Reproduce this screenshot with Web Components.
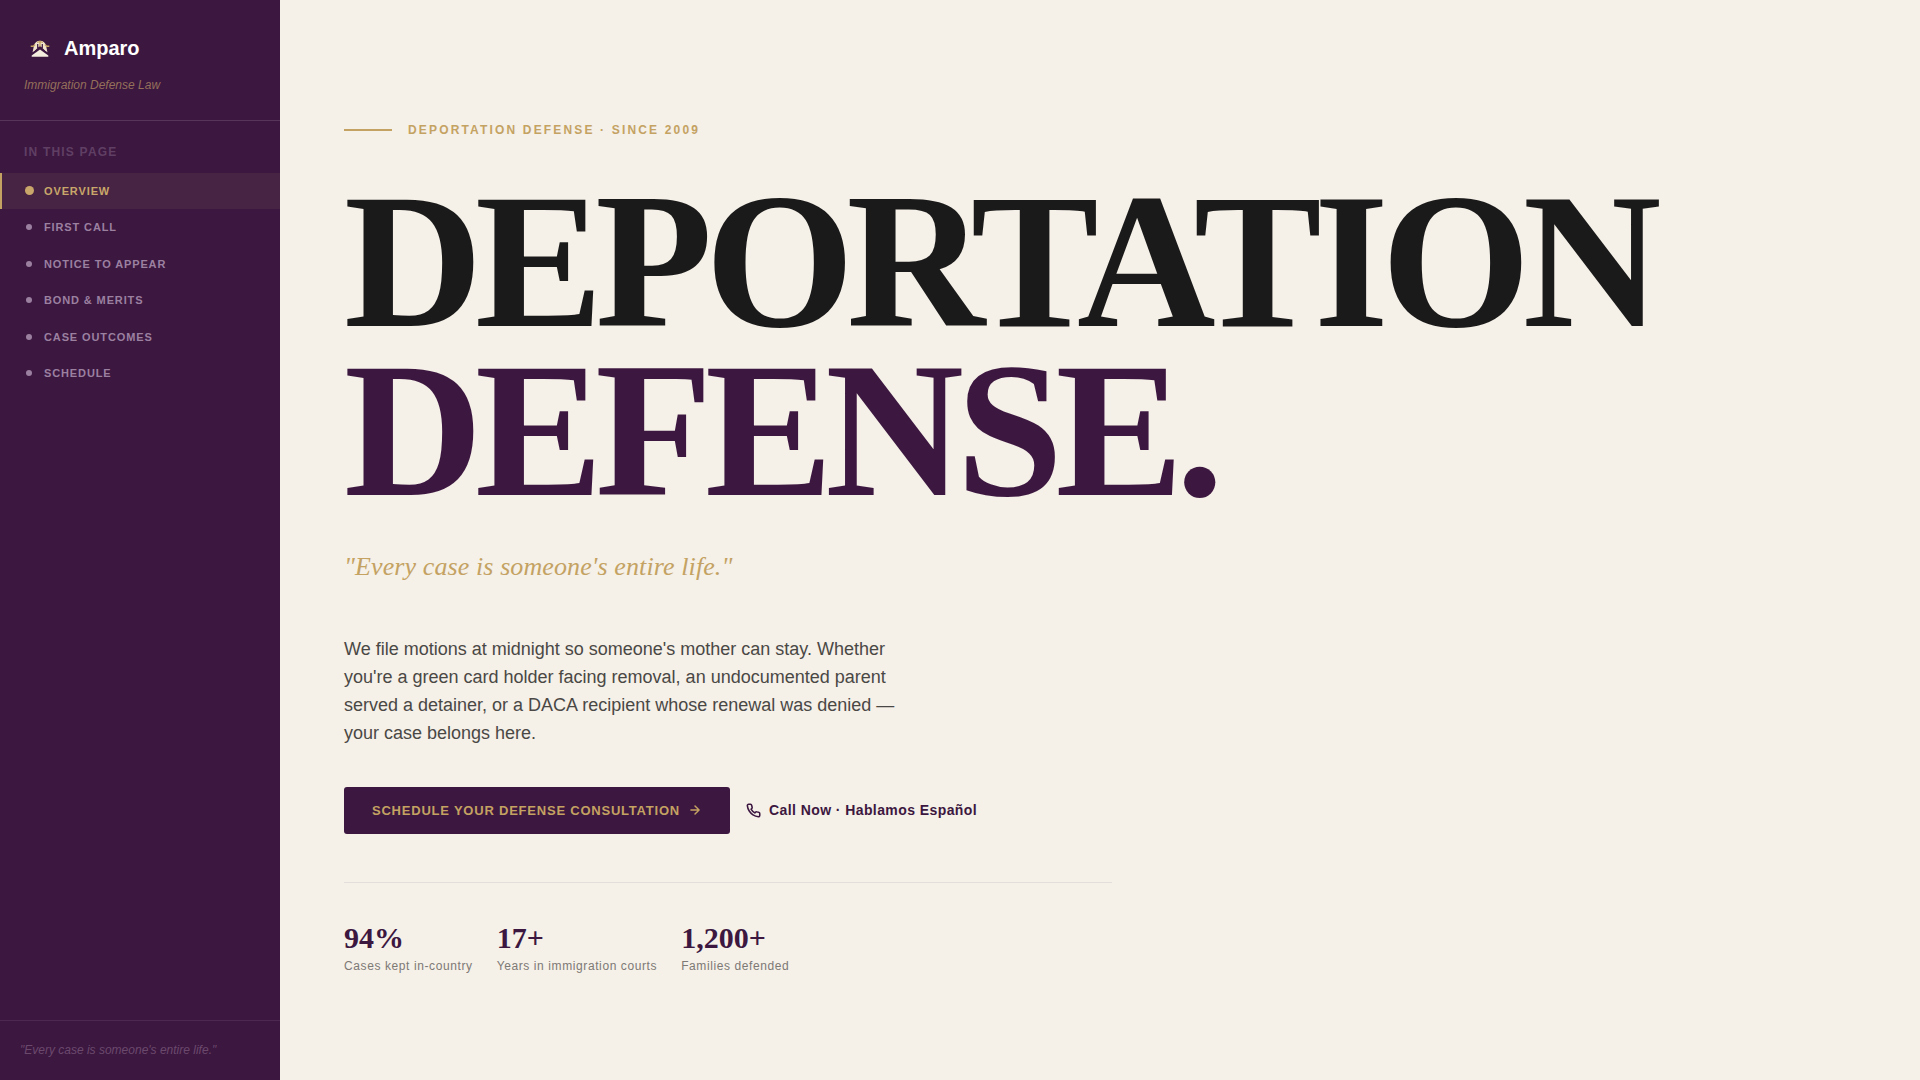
<!DOCTYPE html>
<html lang="en">
<head>
<meta charset="utf-8">
<title>Amparo — Immigration Defense Law</title>
<style>
:root{--plum:#3c1740;--gold:#c4a262;--cream:#f5f0e8;--ink:#1a1a1a}
body{margin:0;background:var(--cream);color:var(--ink);font-family:"Liberation Sans",sans-serif}
</style>
</head>
<body>
<amparo-page>
  <amparo-sidebar slot="sidebar">
    <amparo-nav-item href="#overview" active>Overview</amparo-nav-item>
    <amparo-nav-item href="#first-call">First Call</amparo-nav-item>
    <amparo-nav-item href="#notice">Notice to Appear</amparo-nav-item>
    <amparo-nav-item href="#bond">Bond &amp; Merits</amparo-nav-item>
    <amparo-nav-item href="#outcomes">Case Outcomes</amparo-nav-item>
    <amparo-nav-item href="#schedule">Schedule</amparo-nav-item>
  </amparo-sidebar>
  <amparo-hero>
    <amparo-stat slot="stats" value="94%">Cases kept in-country</amparo-stat>
    <amparo-stat slot="stats" value="17+">Years in immigration courts</amparo-stat>
    <amparo-stat slot="stats" value="1,200+">Families defended</amparo-stat>
  </amparo-hero>
</amparo-page>
<script>
const define = (name, html) => customElements.define(name, class extends HTMLElement {
  constructor() {
    super();
    this.attachShadow({ mode: "open" }).innerHTML = html;
  }
  connectedCallback() {
    const link = this.shadowRoot.querySelector("a[data-link]");
    if (link) {
      link.href = this.getAttribute("href");
      if (this.hasAttribute("active")) link.setAttribute("aria-current", "true");
    }
    const value = this.shadowRoot.querySelector("[data-value]");
    if (value) value.textContent = this.getAttribute("value");
  }
});

define("amparo-page", `
<style>
:host{display:flex;min-height:100vh}
main{flex:1;min-width:0;display:flex}
</style>
<slot name="sidebar"></slot><main><slot></slot></main>`);

define("amparo-sidebar", `
<style>
:host{display:flex;flex-direction:column;width:280px;flex:none;background:var(--plum)}
header{padding:32px 24px 26px;border-bottom:1px solid #573459}
.brand{display:flex;align-items:center;gap:8px;color:#fff;font-weight:700;font-size:20px;line-height:32px;text-decoration:none}
.brand svg{width:32px;height:32px}
p{margin:12px 0 0;font-size:12px;line-height:18px;font-style:italic;color:#94705a}
h2{margin:0;padding:24px 24px 12px;font-size:12px;line-height:1.3;letter-spacing:.1em;color:#603f64;text-transform:uppercase}
nav{flex:1}
footer{padding:20px;border-top:1px solid #4c294f;font-size:12px;line-height:19px;font-style:italic;color:#6b496d}
</style>
<header>
  <a class="brand" href="#overview">
    <svg viewBox="0 0 32 32" aria-hidden="true">
      <path d="M8.500 20.500L10 13.500C10.800 10.500 13 8.700 16 8.700s5.200 1.800 6 4.800l1.500 7L16 15z" fill="#f1e4cd"/>
      <path d="M6.700 14.200h2.600l1.700-1.800M25.300 14.200h-2.600L21 12.400" fill="none" stroke="#c4a262" stroke-width="1.400"/>
      <path d="M13.700 12v4M18.300 12v4" stroke="#3c1740" stroke-width="1.200"/>
      <path d="M8 22l3.500-2.500L16 15l4.500 4.500L24 22" fill="none" stroke="#3c1740" stroke-width="2"/>
      <path d="M16 10v5M13 10.500l3-1 3 1" fill="none" stroke="#c4a262" stroke-width="1.300"/>
      <path d="M16 17.500l8.300 6v1.300H7.700v-1.300z" fill="#f5eddd"/>
    </svg>
    <span>Amparo</span>
  </a>
  <p>Immigration Defense Law</p>
</header>
<h2>In this page</h2>
<nav aria-label="In this page"><slot></slot></nav>
<footer>"Every case is someone's entire life."</footer>`);

define("amparo-nav-item", `
<style>
:host{display:block}
a{display:flex;align-items:center;gap:10px;padding:10px 24px 10px 22px;border-left:2px solid transparent;font-size:11px;line-height:1.5;font-weight:700;letter-spacing:.08em;text-transform:uppercase;text-decoration:none;color:#9b80a0}
i{display:flex;align-items:center;justify-content:center;width:10px;height:10px}
i::before{content:"";width:6px;height:6px;border-radius:50%;background:#9b80a0}
a[aria-current]{border-color:var(--gold);background:#472443;color:#c9a76a}
a[aria-current] i::before{width:9px;height:9px;background:#c9a76a}
</style>
<a data-link><i></i><span><slot></slot></span></a>`);

define("amparo-stat", `
<style>
:host{display:block}
strong{display:block;font:700 30px/30px "Liberation Serif",serif;color:var(--plum)}
span{display:block;margin-top:4px;font-size:12px;line-height:18px;letter-spacing:.05em;color:#7d7975}
</style>
<strong data-value></strong><span><slot></slot></span>`);

define("amparo-hero", `
<style>
:host{display:flex;flex-direction:column;justify-content:center;flex:1;min-width:0;padding:80px 64px 64px}
.eyebrow{display:flex;align-items:center;gap:16px;margin:0 0 39px;font-size:12px;line-height:18px;font-weight:700;letter-spacing:.18em;color:var(--gold);text-transform:uppercase}
.eyebrow::before{content:"";width:48px;height:2px;background:var(--gold)}
h1{margin:0 0 31px;font:700 192px/.88 "Liberation Serif",serif;letter-spacing:-.04em;text-transform:uppercase}
h1 span{display:block}
h1 .accent{color:var(--plum)}
blockquote{margin:0 0 48px;font:italic 26px/40px "Liberation Serif",serif;letter-spacing:.004em;color:var(--gold)}
.lead{margin:0 0 40px;max-width:560px;font-size:18px;line-height:28px;color:#4a4845}
.actions{display:flex;align-items:center;flex-wrap:wrap;gap:16px}
button{display:flex;align-items:center;gap:8px;padding:16px 28px;border:0;border-radius:3px;background:var(--plum);color:var(--gold);font:700 13px/15px "Liberation Sans",sans-serif;letter-spacing:.06em;text-transform:uppercase}
.call{display:flex;align-items:center;gap:8px;font-size:14px;line-height:20px;font-weight:700;letter-spacing:.03em;text-decoration:none;color:var(--plum)}
svg{fill:none;stroke:currentColor;stroke-width:2.500;stroke-linecap:round;stroke-linejoin:round}
.stats{display:flex;gap:24px;max-width:768px;margin-top:48px;padding-top:40px;border-top:1px solid #e3dddb}
</style>
<p class="eyebrow">Deportation Defense · Since 2009</p>
<h1><span>Deportation</span><span class="accent">Defense.</span></h1>
<blockquote>"Every case is someone's entire life."</blockquote>
<p class="lead">We file motions at midnight so someone's mother can stay. Whether you're a green card holder facing removal, an undocumented parent served a detainer, or a DACA recipient whose renewal was denied — your case belongs here.</p>
<div class="actions">
  <button type="button">Schedule your defense consultation
    <svg width="14" height="14" viewBox="0 0 24 24" aria-hidden="true"><path d="M5 12h14M12 5l7 7-7 7"/></svg>
  </button>
  <a class="call" href="#call">
    <svg width="15" height="15" viewBox="0 0 24 24" aria-hidden="true"><path d="M22 16.920v3a2 2 0 0 1-2.180 2 19.790 19.790 0 0 1-8.630-3.070 19.500 19.500 0 0 1-6-6 19.790 19.790 0 0 1-3.070-8.670A2 2 0 0 1 4.110 2h3a2 2 0 0 1 2 1.720 12.840 12.840 0 0 0 .7 2.810 2 2 0 0 1-.45 2.110L8.090 9.910a16 16 0 0 0 6 6l1.270-1.270a2 2 0 0 1 2.110-.45 12.840 12.840 0 0 0 2.810.7A2 2 0 0 1 22 16.920z"/></svg>
    <span>Call Now · Hablamos Español</span>
  </a>
</div>
<div class="stats"><slot name="stats"></slot></div>`);
</script>
</body>
</html>
